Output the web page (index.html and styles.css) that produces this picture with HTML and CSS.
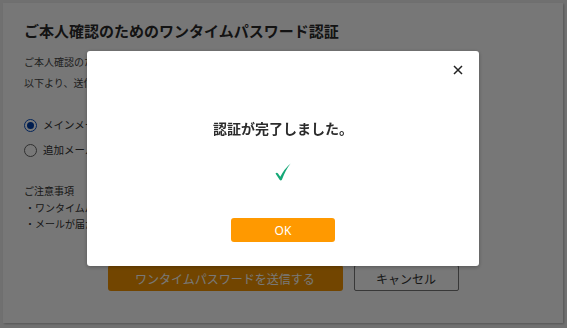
FILE: index.html
```html
<!DOCTYPE html>
<html lang="ja">
<head>
<meta charset="utf-8">
<link rel="stylesheet" href="styles.css">
</head>
<body>
<div class="page">
  <div class="card">
    <h1 class="title">ご本人確認のためのワンタイムパスワード認証</h1>
    <p class="lead">ご本人確認のため、ワンタイムパスワードをメールでお送りします。<br>以下より、送信先のメールアドレスを選択してください。</p>
    <div class="radios">
      <label class="radio"><span class="dot on"></span>メインメールアドレス</label>
      <label class="radio"><span class="dot"></span>追加メールアドレス</label>
    </div>
    <div class="notes">
      <div class="notes-title">ご注意事項</div>
      <div class="note">・ワンタイムパスワードの有効期限は発行から30分です。</div>
      <div class="note">・メールが届かない場合は迷惑メールフォルダをご確認ください。</div>
    </div>
    <div class="actions">
      <button class="btn-primary">ワンタイムパスワードを送信する</button>
      <button class="btn-cancel">キャンセル</button>
    </div>
  </div>
</div>
<div class="overlay"></div>
<div class="modal">
  <div class="modal-head">
    <svg class="close" width="10" height="10" viewBox="0 0 10 10"><path d="M1 1L9 9M9 1L1 9" stroke="#222" stroke-width="1.5" fill="none"/></svg>
  </div>
  <div class="modal-title">認証が完了しました。</div>
  <div class="modal-check">
    <svg width="16" height="18" viewBox="0 0 16 18"><path d="M0.5 10.6 Q1.8 9.2 3 10.4 L5.3 13.8 Q9 6 15.6 0.4 Q10.6 6.6 6.9 16.8 Q5.8 18.2 4.6 16.8 Z" fill="#15a877"/></svg>
  </div>
  <button class="modal-ok">OK</button>
</div>
</body>
</html>
```
FILE: styles.css
```css
* { box-sizing: border-box; }
html, body { margin: 0; padding: 0; }
body {
  width: 567px;
  height: 328px;
  overflow: hidden;
  background: #efefef;
  font-family: "Noto Sans CJK JP", "Noto Sans", sans-serif;
  color: #333;
}
.page { padding: 3px 4px 5px 3px; height: 328px; }
.card {
  background: #fdfdfd;
  height: 320px;
  padding: 19px 21px 0 21px;
  box-shadow: 1px 1px 2px rgba(0,0,0,0.25);
  display: flex;
  flex-direction: column;
}
.title {
  margin: 0;
  font-size: 15px;
  font-weight: bold;
  line-height: 18px;
  color: #2a2a2a;
  white-space: nowrap;
}
.lead {
  margin: 11px 0 0;
  font-size: 10px;
  line-height: 21px;
  color: #444;
  white-space: nowrap;
}
.radios { margin-top: 25px; display: flex; flex-direction: column; gap: 11px; }
.radio { display: flex; align-items: center; gap: 6px; font-size: 10.5px; line-height: 14px; color: #333; white-space: nowrap; }
.dot {
  width: 13px; height: 13px; border-radius: 50%;
  border: 1px solid #666; background: #fff; display: inline-block; position: relative;
}
.dot.on { border-color: #0a4fc0; }
.dot.on::after {
  content: ""; position: absolute; left: 2px; top: 2px; width: 7px; height: 7px; border-radius: 50%; background: #003fa8;
}
.notes { margin-top: 26px; font-size: 10px; line-height: 16px; color: #333; white-space: nowrap; }
.notes-title { margin-bottom: 1px; }
.note { padding-left: 1px; }
.actions {
  margin-top: 33px;
  display: flex;
  justify-content: center;
  gap: 11px;
}
.btn-primary {
  width: 235px; height: 26px; border: none; border-radius: 3px;
  background: #f29400; color: #fff; font-family: inherit; font-size: 12px;
}
.btn-cancel {
  width: 105px; height: 26px; border: 1px solid #777; border-radius: 2px;
  background: #fff; color: #333; font-family: inherit; font-size: 12px;
}
.overlay {
  position: fixed; inset: 0; background: rgba(0,0,0,0.53);
}
.modal {
  position: fixed;
  left: 87px; top: 51px;
  width: 392px; height: 215px;
  background: #fff;
  border-radius: 3px;
  box-shadow: 0 1px 4px rgba(0,0,0,0.3);
  display: flex; flex-direction: column; align-items: center;
}
.modal-head { align-self: stretch; display: flex; justify-content: flex-end; padding: 14px 16px 0 0; height: 28px; }
.close { display: block; }
.modal-title {
  margin-top: 40px;
  font-size: 14px; font-weight: bold; line-height: 18px; color: #2c2c2c;
}
.modal-check { margin-top: 26px; height: 18px; display: flex; }
.modal-ok {
  margin-top: 37px;
  width: 104px; height: 24px; border: none; border-radius: 3px;
  background: #ff9900; color: #fff; font-family: "Noto Sans", sans-serif; font-size: 12px;
}
```
